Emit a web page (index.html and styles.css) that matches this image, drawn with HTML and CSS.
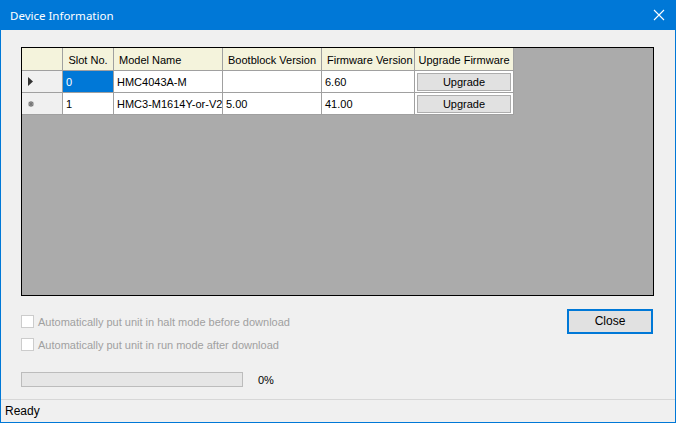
FILE: index.html
```html
<!DOCTYPE html>
<html lang="en">
<head>
    <meta charset="UTF-8">
    <title>Device Information</title>
    <link rel="stylesheet" href="styles.css">
</head>
<body>
    <div class="window">
        <div class="titlebar">
            <span class="title">Device Information</span>
            <svg class="close-x" width="12" height="12" viewBox="0 0 12 12">
                <path d="M1 1 L11 11 M11 1 L1 11" stroke="#fff" stroke-width="1.1"/>
            </svg>
        </div>

        <div class="content">
            <div class="grid-box">
                <div class="grid">
                    <div class="hdr corner"></div>
                    <div class="hdr center">Slot No.</div>
                    <div class="hdr">Model Name</div>
                    <div class="hdr">Bootblock Version</div>
                    <div class="hdr">Firmware Version</div>
                    <div class="hdr center">Upgrade Firmware</div>

                    <div class="rowhdr">
                        <svg width="6" height="9" viewBox="0 0 6 9"><path d="M0 0 L5 4.5 L0 9 Z" fill="#333"/></svg>
                    </div>
                    <div class="cell selected">0</div>
                    <div class="cell">HMC4043A-M</div>
                    <div class="cell"></div>
                    <div class="cell">6.60</div>
                    <div class="cell btn-cell"><span class="grid-btn">Upgrade</span></div>

                    <div class="rowhdr">
                        <svg width="6" height="6" viewBox="0 0 6 6"><path d="M3 0 V6 M0 3 H6 M0.8 0.8 L5.2 5.2 M5.2 0.8 L0.8 5.2" stroke="#777" stroke-width="1.2"/></svg>
                    </div>
                    <div class="cell">1</div>
                    <div class="cell">HMC3-M1614Y-or-V2</div>
                    <div class="cell">5.00</div>
                    <div class="cell">41.00</div>
                    <div class="cell btn-cell"><span class="grid-btn">Upgrade</span></div>
                </div>
            </div>

            <div class="lower">
                <div class="options">
                    <div class="check"><span class="box"></span>Automatically put unit in halt mode before download</div>
                    <div class="check"><span class="box"></span>Automatically put unit in run mode after download</div>
                    <div class="progress-row">
                        <div class="progress"></div>
                        <span class="percent">0%</span>
                    </div>
                </div>
                <button class="close-btn">Close</button>
            </div>
        </div>

        <div class="status">Ready</div>
    </div>
</body>
</html>
```

FILE: styles.css
```css
:root {
    --accent: #0078d7;
    --face: #f0f0f0;
    --line: #a0a0a0;
    --header: #f4f3dc;
}
html, body {
    margin: 0;
    padding: 0;
}
body {
    font-family: "Liberation Sans", Arial, sans-serif;
    font-size: 11px;
    color: #000;
    background: var(--face);
}
.window {
    width: 676px;
    height: 423px;
    box-sizing: border-box;
    border: 1px solid var(--accent);
    border-top: none;
    display: flex;
    flex-direction: column;
    background: var(--face);
}
.titlebar {
    height: 30px;
    margin: 0 -1px;
    background: var(--accent);
    color: #fff;
    display: flex;
    align-items: center;
    justify-content: space-between;
    padding: 0 11px 0 10px;
    flex-shrink: 0;
}
.title {
    font-family: "Noto Sans", "Open Sans", sans-serif;
    font-size: 11.5px;
}
.close-x {
    display: block;
}
.content {
    flex: 1;
    padding: 17px 21px 0 20px;
}
.grid-box {
    height: 249px;
    box-sizing: border-box;
    border: 1px solid #000;
    background: #ababab;
}
.grid {
    display: inline-grid;
    grid-template-columns: 40px 50px 108px 98px 92px 98px;
    grid-template-rows: 22px 21px 21px;
    gap: 1px;
    background: var(--line);
    padding: 0 1px 1px 0;
}
.hdr {
    background: var(--header);
    display: flex;
    align-items: center;
    padding: 1px 0 0 5px;
    white-space: nowrap;
    overflow: hidden;
}
.hdr.center {
    justify-content: center;
    padding-left: 0;
}
.rowhdr {
    background: var(--face);
    display: flex;
    align-items: center;
    padding-left: 6px;
}
.cell {
    background: #fff;
    display: flex;
    align-items: center;
    padding: 1px 0 0 3px;
    white-space: nowrap;
    overflow: hidden;
}
.cell.selected {
    background: var(--accent);
    color: #fff;
}
.btn-cell {
    padding: 1px;
    justify-content: center;
}
.grid-btn {
    width: 94px;
    height: 18px;
    box-sizing: border-box;
    background: #e1e1e1;
    border: 1px solid #adadad;
    display: flex;
    align-items: center;
    justify-content: center;
}
.lower {
    display: flex;
    justify-content: space-between;
    align-items: flex-start;
    margin-top: 13px;
}
.options {
    padding-top: 1px;
}
.check {
    height: 23px;
    display: flex;
    align-items: center;
    color: #a0a0a0;
}
.box {
    width: 13px;
    height: 13px;
    box-sizing: border-box;
    border: 1px solid #cccccc;
    background: #fff;
    margin-right: 4px;
}
.progress-row {
    display: flex;
    align-items: center;
    margin-top: 16px;
}
.progress {
    width: 222px;
    height: 15px;
    box-sizing: border-box;
    border: 1px solid #bcbcbc;
    background: #e6e6e6;
}
.percent {
    margin-left: 15px;
}
.close-btn {
    width: 86px;
    height: 25px;
    margin-right: 1px;
    box-sizing: border-box;
    border: 2px solid var(--accent);
    background: #e1e1e1;
    font-family: "Liberation Sans", Arial, sans-serif;
    font-size: 12px;
    color: #000;
    padding: 0 0 1px;
}
.status {
    height: 22px;
    border-top: 1px solid #d7d7d7;
    display: flex;
    align-items: center;
    padding-left: 4px;
    font-size: 12px;
    flex-shrink: 0;
}
```
